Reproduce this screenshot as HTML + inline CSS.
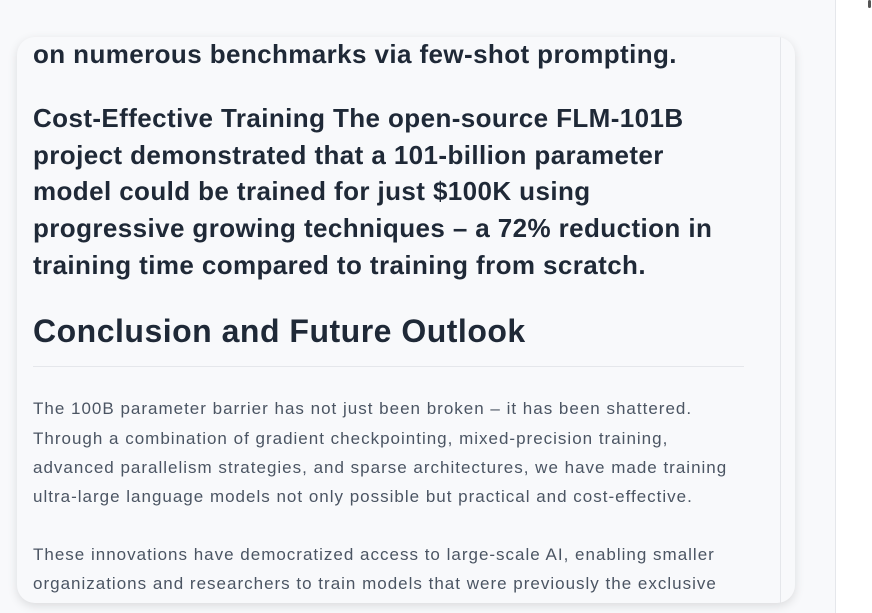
<!DOCTYPE html><html><head><style>
body{margin:0;width:872px;height:613px;background:#f8f9fb;position:relative;overflow:hidden;font-family:"Liberation Sans",sans-serif}
.side{position:absolute;left:835px;top:0;width:37px;height:613px;background:#fff;border-left:1px solid #e5e7eb}
.mark{position:absolute;left:868px;top:0;width:3px;height:8px;background:#555;border-radius:2px}
.card{position:absolute;left:17px;top:37px;width:778px;height:566px;background:#f8f9fb;border-radius:18px;box-shadow:0 3px 10px rgba(0,0,0,.12);overflow:hidden}
.vl{position:absolute;left:763px;top:0;width:1px;height:566px;background:#e5e7eb}
.l{position:absolute;left:33px;white-space:nowrap;color:#1f2937}
.b{font-weight:bold;font-size:26px;line-height:37px;letter-spacing:.4px}
.h{font-weight:bold;font-size:32px;line-height:40px;letter-spacing:.5px}
.t{font-size:17px;line-height:29px;letter-spacing:1px;color:#4b5563}
.hr{position:absolute;left:33px;top:366px;width:711px;height:1px;background:#e5e7eb}
</style></head><body>
<div class="side"></div><div class="mark"></div>
<div class="card"><div class="vl"></div></div>
<div class="l b" style="top:36px">on numerous benchmarks via few-shot prompting.</div>
<div class="l b" style="top:100px">Cost-Effective Training The open-source FLM-101B</div>
<div class="l b" style="top:137px">project demonstrated that a 101-billion parameter</div>
<div class="l b" style="top:173px">model could be trained for just $100K using</div>
<div class="l b" style="top:210px">progressive growing techniques – a 72% reduction in</div>
<div class="l b" style="top:247px">training time compared to training from scratch.</div>
<div class="l h" style="top:311px">Conclusion and Future Outlook</div>
<div class="hr"></div>
<div class="l t" style="top:394px">The 100B parameter barrier has not just been broken – it has been shattered.</div>
<div class="l t" style="top:424px">Through a combination of gradient checkpointing, mixed-precision training,</div>
<div class="l t" style="top:453px">advanced parallelism strategies, and sparse architectures, we have made training</div>
<div class="l t" style="top:482px">ultra-large language models not only possible but practical and cost-effective.</div>
<div class="l t" style="top:540px">These innovations have democratized access to large-scale AI, enabling smaller</div>
<div class="l t" style="top:569px">organizations and researchers to train models that were previously the exclusive</div>
</body></html>
